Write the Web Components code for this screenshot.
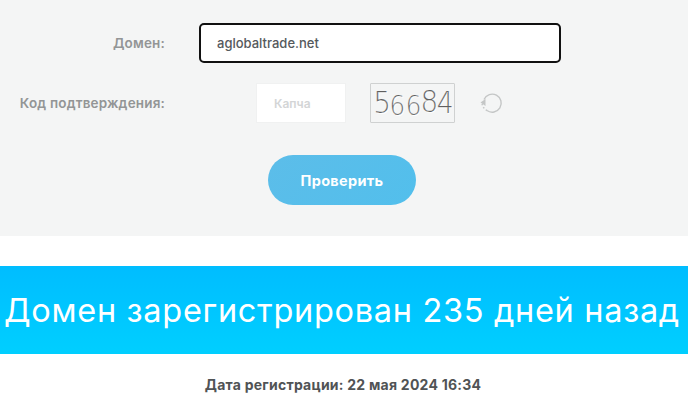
<!DOCTYPE html>
<html lang="ru"><head><meta charset="utf-8"><style>
html,body{margin:0;padding:0;background:#fff;overflow:hidden}
body{font-family:Inter,"Open Sans",sans-serif;width:688px;height:412px}
</style></head><body>
<whois-page></whois-page>
<script>
const FONT='Inter,"Open Sans",sans-serif';
class FormRow extends HTMLElement{constructor(){super();this.attachShadow({mode:'open'}).innerHTML=`<style>
:host{display:flex;align-items:center}
.l{width:165px;text-align:right;font:600 13.5px ${FONT};letter-spacing:.17px;color:#939596;white-space:nowrap;flex:none}
.c{flex:1;display:flex;align-items:center}
</style><div class="l"><slot name="label"></slot></div><div class="c"><slot></slot></div>`}}
customElements.define('form-row',FormRow);
class DomainField extends HTMLElement{constructor(){super();this.attachShadow({mode:'open'}).innerHTML=`<style>
:host{display:flex;align-items:center;box-sizing:border-box;width:362px;height:40px;margin-left:34px;padding-left:16px;background:#fff;border:2px solid #111;border-radius:5px;font:500 13px ${FONT};color:#55595c}
</style><slot></slot>`}}
customElements.define('domain-field',DomainField);
class CaptchaField extends HTMLElement{constructor(){super();this.attachShadow({mode:'open'}).innerHTML=`<style>
:host{display:flex;align-items:center;box-sizing:border-box;width:90px;height:40px;margin-left:91px;padding-left:17px;background:#fff;border:1px solid #f0f1f1;font:600 12px ${FONT};color:#d3d5d6}
</style><slot></slot>`}}
customElements.define('captcha-field',CaptchaField);
class CaptchaImage extends HTMLElement{constructor(){super();this.attachShadow({mode:'open'}).innerHTML=`<style>
:host{display:flex;align-items:center;justify-content:center;box-sizing:border-box;width:85px;height:40px;margin-left:24px;border:1px solid #cfd1d1;border-radius:1px;background:#f4f5f5;font:300 31px "DejaVu Sans",sans-serif;color:#5f5f5f;letter-spacing:-2.3px;overflow:hidden}
span{display:inline-block;text-shadow:1px 1px 0 #fff;-webkit-text-stroke:.2px #f4f5f5}
.w{transform:scaleX(.9);display:flex}
</style><div class="w"><span style="transform:translateY(-1px) scaleY(.98)">5</span><span style="transform:translateY(2px) scale(.88)">6</span><span style="transform:translateY(2px) scale(.88)">6</span><span style="transform:translateY(-2px)">8</span><span style="transform:translateY(-1px) scale(.95,1)">4</span></div>`}}
customElements.define('captcha-image',CaptchaImage);
class RefreshIcon extends HTMLElement{constructor(){super();this.attachShadow({mode:'open'}).innerHTML=`<style>
:host{display:block;width:24px;height:24px;margin-left:24px}svg{display:block}
</style><svg width="24" height="24" viewBox="0 0 24 24" fill="none" stroke="#c4c6c6"><path d="M5 8.5A9 9 0 1 1 8 19.5" stroke-width="1.4"/><path d="M8 19.5A9 9 0 0 1 3 12" stroke-width="1.4" stroke-dasharray="1.5 2"/><path d="M1.5 11.5L6.5 8v7z" fill="#c4c6c6" stroke="none"/></svg>`}}
customElements.define('refresh-icon',RefreshIcon);
class CheckButton extends HTMLElement{constructor(){super();this.attachShadow({mode:'open'}).innerHTML=`<style>
:host{display:flex;align-items:center;justify-content:center;width:148px;height:50px;border-radius:25px;background:linear-gradient(135deg,#5cbde9,#52bfec);color:#fff;font:700 14.5px ${FONT};letter-spacing:.3px}
</style><slot></slot>`}}
customElements.define('check-button',CheckButton);
class FormPanel extends HTMLElement{constructor(){super();this.attachShadow({mode:'open'}).innerHTML=`<style>
:host{display:flex;flex-direction:column;box-sizing:border-box;height:236px;padding-top:23px;background:#f4f5f5}
.s{display:flex;flex-direction:column;gap:20px}
.b{display:flex;justify-content:center;margin-top:32px;padding-right:4px}
</style><div class="s"><slot name="rows"></slot></div><div class="b"><slot name="action"></slot></div>`}}
customElements.define('form-panel',FormPanel);
class ResultBanner extends HTMLElement{constructor(){super();this.attachShadow({mode:'open'}).innerHTML=`<style>
:host{display:flex;align-items:center;justify-content:center;height:88px;margin-top:30px;padding-right:4px;background:linear-gradient(#00bdff,#00cfff);color:#fff;font:400 32.5px ${FONT};letter-spacing:.69px;white-space:nowrap}
</style><slot></slot>`}}
customElements.define('result-banner',ResultBanner);
class DateLine extends HTMLElement{constructor(){super();this.attachShadow({mode:'open'}).innerHTML=`<style>
:host{display:block;margin-top:22px;padding-right:2px;text-align:center;font:700 14px/18px ${FONT};letter-spacing:.24px;color:#505355}
</style><slot></slot>`}}
customElements.define('date-line',DateLine);
class WhoisPage extends HTMLElement{constructor(){super();this.attachShadow({mode:'open'}).innerHTML=`<style>:host{display:block}</style>
<form-panel>
<form-row slot="rows"><span slot="label">Домен:</span><domain-field>aglobaltrade.net</domain-field></form-row>
<form-row slot="rows"><span slot="label">Код подтверждения:</span><captcha-field>Капча</captcha-field><captcha-image></captcha-image><refresh-icon></refresh-icon></form-row>
<check-button slot="action">Проверить</check-button>
</form-panel>
<result-banner>Домен зарегистрирован 235 дней назад</result-banner>
<date-line>Дата регистрации: 22 мая 2024 16:34</date-line>`}}
customElements.define('whois-page',WhoisPage);
</script></body></html>
